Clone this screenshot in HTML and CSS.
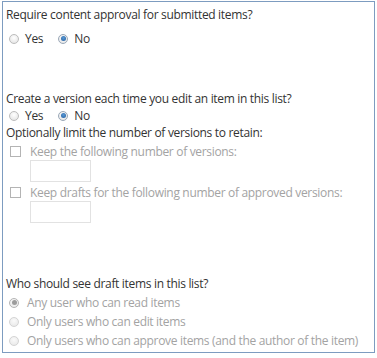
FILE: index.html
```html
<!DOCTYPE html>
<html lang="en">
<head>
    <meta charset="UTF-8">
    <title>Versioning Settings</title>
    <link rel="stylesheet" href="styles.css">
</head>
<body>
    <div class="panel">
        <div class="section">
            <div class="question">Require content approval for submitted items?</div>
            <div class="choice-row first">
                <label class="choice"><span class="radio"></span>Yes</label>
                <label class="choice"><span class="radio checked"></span>No</label>
            </div>
        </div>

        <div class="section versions">
            <div class="question">Create a version each time you edit an item in this list?</div>
            <div class="choice-row">
                <label class="choice"><span class="radio"></span>Yes</label>
                <label class="choice"><span class="radio checked"></span>No</label>
            </div>
            <div class="question">Optionally limit the number of versions to retain:</div>
            <div class="limit">
                <label class="check-row"><span class="checkbox"></span>Keep the following number of versions:</label>
                <div class="number-box"></div>
            </div>
            <div class="limit">
                <label class="check-row"><span class="checkbox"></span>Keep drafts for the following number of approved versions:</label>
                <div class="number-box"></div>
            </div>
        </div>

        <div class="section drafts">
            <div class="question">Who should see draft items in this list?</div>
            <label class="option"><span class="radio disabled checked"></span>Any user who can read items</label>
            <label class="option"><span class="radio disabled"></span>Only users who can edit items</label>
            <label class="option"><span class="radio disabled"></span>Only users who can approve items (and the author of the item)</label>
        </div>
    </div>
</body>
</html>
```

FILE: styles.css
```css
body {
    margin: 0;
    background: #fff;
    font-family: "Open Sans", "Noto Sans", sans-serif;
    font-size: 12px;
    letter-spacing: -0.32px;
    line-height: 17px;
    color: #444;
}
.panel {
    margin: 1px 2px 0 2px;
    height: 352px;
    border: 1px solid #7d9cc0;
    box-sizing: border-box;
    padding: 4px 2px 0 3px;
}
.question {
    color: #333;
    white-space: nowrap;
}
.choice-row {
    display: flex;
    gap: 15px;
    padding-left: 3px;
}
.choice-row.first {
    margin-top: 7px;
}
.choice {
    display: flex;
    align-items: center;
    gap: 6px;
    color: #333;
}
.radio {
    flex: none;
    width: 8px;
    height: 8px;
    border-radius: 50%;
    border: 1px solid #bcbcbc;
    background: radial-gradient(circle at 50% 35%, #fff 0, #e0e0e0 100%);
    position: relative;
}
.radio.checked {
    border-color: #9aa8b8;
}
.radio.checked::after {
    content: "";
    position: absolute;
    left: 1.5px;
    top: 1.5px;
    width: 5px;
    height: 5px;
    border-radius: 50%;
    background: radial-gradient(circle at 50% 40%, #5a9ad6 0, #1f5a9c 100%);
}
.radio.disabled {
    border-color: #d4d4d4;
    background: radial-gradient(circle at 50% 35%, #fafafa 0, #e6e6e6 100%);
}
.radio.disabled.checked {
    border-color: #b4b4b4;
}
.radio.disabled.checked::after {
    background: #9c9c9c;
}
.versions {
    margin-top: 43px;
}
.limit {
    margin-top: 2px;
}
.check-row {
    display: flex;
    align-items: center;
    gap: 9px;
    padding-left: 4px;
    color: #a3a3a3;
    white-space: nowrap;
}
.checkbox {
    flex: none;
    width: 9px;
    height: 9px;
    border: 1px solid #b4b4b4;
    background: #fff;
}
.number-box {
    margin: 0 0 0 24px;
    width: 61px;
    height: 22px;
    border: 1px solid #e2e2e2;
    box-sizing: border-box;
}
.drafts {
    margin-top: 52px;
}
.option {
    display: flex;
    align-items: center;
    gap: 8px;
    padding-left: 3px;
    margin-top: 2px;
    color: #a3a3a3;
    white-space: nowrap;
}
```
